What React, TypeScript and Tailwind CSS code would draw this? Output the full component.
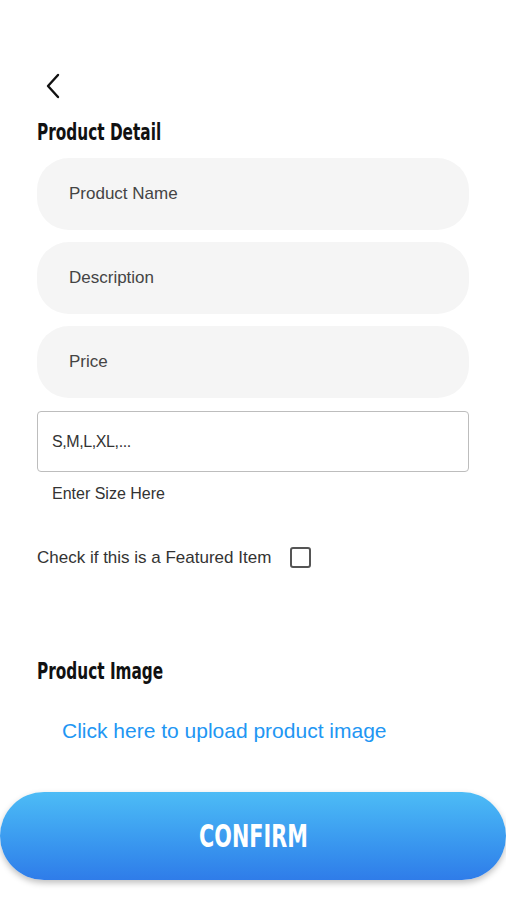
import { useState } from "react";

const heading = "font-['DejaVu_Sans_Condensed','Liberation_Sans',sans-serif] font-bold";

function PillField({ placeholder }: { placeholder: string }) {
  return (
    <div className="h-[72px] rounded-[32px] bg-[#f5f5f5] flex items-center pl-8">
      <span className="text-[17px] text-[#444]">{placeholder}</span>
    </div>
  );
}

export default function App() {
  const [featured, setFeatured] = useState(false);

  return (
    <div className="w-[506px] h-[900px] bg-white font-['Liberation_Sans','Roboto',sans-serif] flex flex-col">
      <div className="px-[37px] pt-[74px] flex flex-col">
        {/* back */}
        <button className="w-6 h-6 ml-[4px] flex items-center justify-center text-[#111]">
          <svg width="16" height="26" viewBox="0 0 16 26" fill="none">
            <path d="M13 2 L3 13 L13 24" stroke="currentColor" strokeWidth="2.4" strokeLinecap="round" strokeLinejoin="round" />
          </svg>
        </button>

        <h2 className="mt-[23px] leading-none h-[22px]">
          <span className={`${heading} inline-block text-[23px] text-[#111] scale-x-[0.74] origin-left`}>Product Detail</span>
        </h2>

        <div className="flex flex-col gap-[12px] mt-[15px]">
          <PillField placeholder="Product Name" />
          <PillField placeholder="Description" />
          <PillField placeholder="Price" />
        </div>

        <div className="mt-[13px] h-[61px] border border-[#bdbdbd] rounded-[4px] flex items-center pl-[14px]">
          <span className="text-[16px] text-[#333] tracking-tight">S,M,L,XL,...</span>
        </div>
        <p className="text-[16px] text-[#333] mt-[10px] pl-[15px]">Enter Size Here</p>

        <div className="flex items-center mt-[39px]">
          <span className="text-[17px] text-[#333]">Check if this is a Featured Item</span>
          <button
            onClick={() => setFeatured(!featured)}
            className="ml-[19px] w-[21px] h-[21px] border-2 border-[#555] rounded-[3px]"
          />
        </div>

        <h2 className="mt-[89px] leading-none h-[22px]">
          <span className={`${heading} inline-block text-[23px] text-[#111] scale-x-[0.74] origin-left`}>Product Image</span>
        </h2>

        <p className="text-[21px] text-[#2196f3] mt-[33px] pl-[25px]">Click here to upload product image</p>
      </div>

      <button className="mt-[46px] h-[88px] w-full rounded-full bg-gradient-to-b from-[#4dbcf6] to-[#2f7ce9] shadow-[0_3px_6px_rgba(0,0,0,0.25)] flex items-center justify-center">
        <span className={`${heading} inline-block text-white text-[32px] scale-x-[0.72]`}>CONFIRM</span>
      </button>
    </div>
  );
}
